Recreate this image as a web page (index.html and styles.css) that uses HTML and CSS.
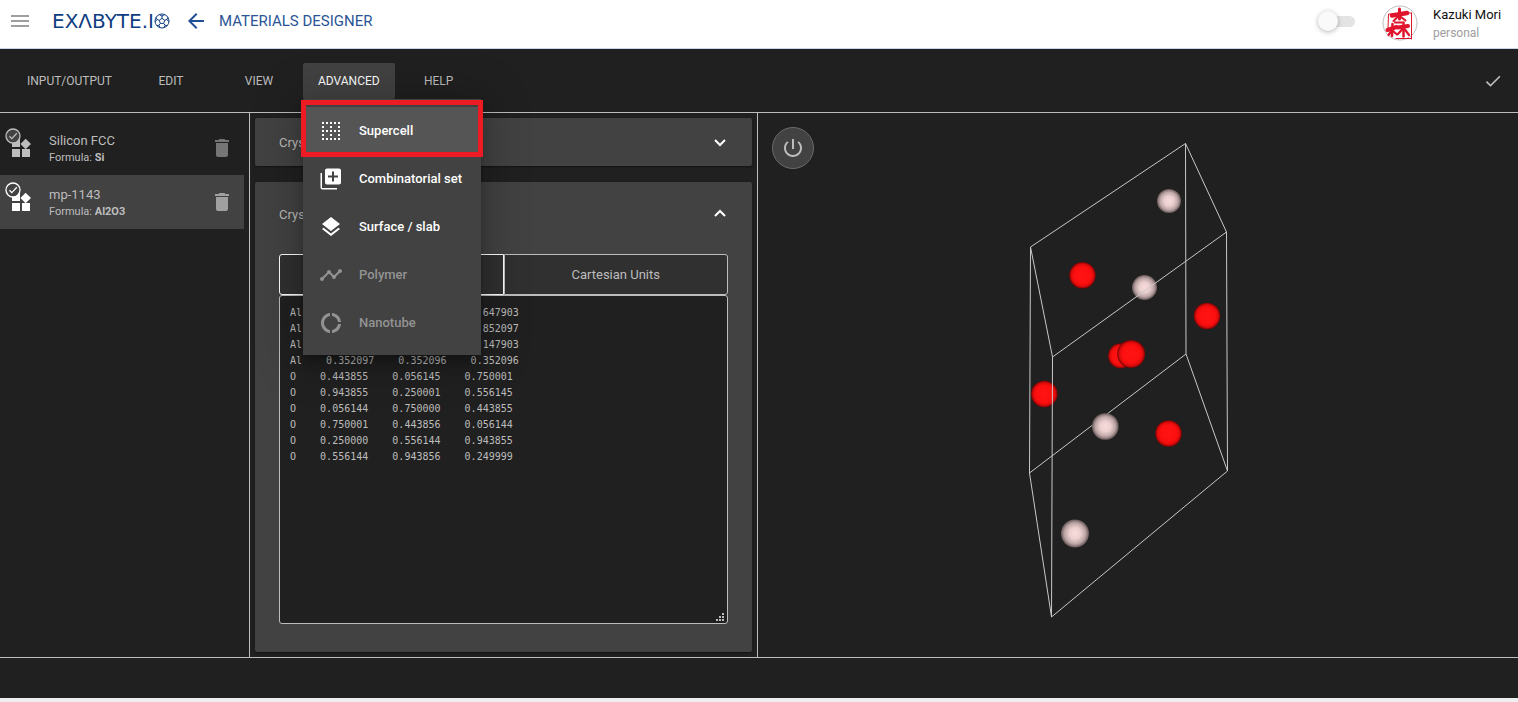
FILE: index.html
```html
<!DOCTYPE html>
<html lang="en">
<head>
<meta charset="utf-8">
<title>Materials Designer</title>
<link rel="stylesheet" href="styles.css">
</head>
<body>
<svg class="defs" aria-hidden="true">
  <defs>
    <symbol id="widgets" viewBox="0 0 24 24"><path d="M13 13v8h8v-8h-8zM3 21h8v-8H3v8zM3 3v8h8V3H3zm13.66-.31L11.4 8l5.26 5.26L22 8z"/></symbol>
    <symbol id="trash" viewBox="0 0 24 24"><path d="M6 19c0 1.100.9 2 2 2h8c1.100 0 2-.9 2-2V7H6v12zM19 4h-3.500l-1-1h-5l-1 1H5v2h14V4z"/></symbol>
    <symbol id="badge" viewBox="0 0 16 16"><circle cx="8" cy="8" r="7" fill="#424242" stroke="currentColor" stroke-width="1.300"/><path d="M4.500 8.300l2.300 2.300 5-5.300" fill="none" stroke="currentColor" stroke-width="1.300"/></symbol>
  </defs>
</svg>

<header class="header">
  <button class="icon-btn menu-toggle" aria-label="Menu"><svg viewBox="0 0 24 24"><path d="M3 18h18v-2H3v2zm0-5h18v-2H3v2zm0-7v2h18V6H3z"/></svg></button>
  <a class="logo" href="#">
    <span>EXΛBYTE.I</span>
    <svg viewBox="0 0 16 16"><g fill="none" stroke="currentColor" stroke-width="1"><circle cx="8" cy="8" r="7"/><path d="M8 5.300l2.700 2-1 3.100H6.300l-1-3.100zM8 5.300V3M10.700 7.300l2.200-.8M9.700 10.400l1.400 1.900M6.300 10.400l-1.400 1.900M5.300 7.300l-2.200-.8M5.200 1.600L8 3l2.800-1.400M14 4.400l-1.100 2.100 2 2.300M13.200 12.600l-2.100-.3-1.300 2.500M6.200 14.800l-1.300-2.500-2.100.3M1.100 8.800l2-2.300L2 4.400"/></g></svg>
  </a>
  <button class="icon-btn back" aria-label="Back"><svg viewBox="0 0 24 24"><path d="M20 11H7.830l5.590-5.590L12 4l-8 8 8 8 1.410-1.410L7.830 13H20v-2z"/></svg></button>
  <h1 class="title">MATERIALS DESIGNER</h1>
  <input class="switch" type="checkbox" role="switch" aria-label="Toggle mode">
  <svg class="avatar" viewBox="0 0 36 36" role="img" aria-label="Avatar">
    <circle cx="18" cy="18" r="17" fill="#fff" stroke="#bdbdbd"/>
    <g fill="none" stroke="#e0142c" stroke-linecap="round">
      <path stroke-width="1" d="M6.500 9.500l-.5 14M7 9h5M29.500 8v26M29 8h-5M14 33.500h15.500"/>
      <path stroke-width="4.500" d="M10 10.500l15-2.500"/>
      <path stroke-width="3" d="M17.500 4v10"/>
      <path stroke-width="2" d="M16.500 11l-5 5M19 12l4.500 3.500M13 17.500h7"/>
      <path stroke-width="4" d="M5.500 25l9-3M16 22.500l10-1.500"/>
      <path stroke-width="2.500" d="M10.500 19l-.5 12M21.500 17.500v14"/>
      <path stroke-width="2.200" d="M9.500 26l-3 4M11 26l4 3.500M20.500 24l-4.500 5M22.500 24l4.500 6"/>
    </g>
  </svg>
  <div class="user">
    <span class="user-name">Kazuki Mori</span>
    <span class="user-role">personal</span>
  </div>
</header>

<nav class="menubar">
  <button class="menu-btn">INPUT/OUTPUT</button>
  <button class="menu-btn">EDIT</button>
  <button class="menu-btn">VIEW</button>
  <div class="menu-wrap">
    <button class="menu-btn open" aria-expanded="true">ADVANCED</button>
    <div class="dropdown" role="menu">
      <button class="option selected" role="menuitem">
        <svg viewBox="0 0 24 24"><path d="M3 3h2v2H3zM7 3h2v2H7zM11 3h2v2h-2zM15 3h2v2h-2zM19 3h2v2h-2zM3 7h2v2H3zM11 7h2v2h-2zM19 7h2v2h-2zM3 11h2v2H3zM7 11h2v2H7zM11 11h2v2h-2zM15 11h2v2h-2zM19 11h2v2h-2zM3 15h2v2H3zM11 15h2v2h-2zM19 15h2v2h-2zM3 19h2v2H3zM7 19h2v2H7zM11 19h2v2h-2zM15 19h2v2h-2zM19 19h2v2h-2z"/></svg>
        Supercell</button>
      <button class="option" role="menuitem">
        <svg viewBox="0 0 24 24"><path d="M3 6H1.500v14.500c0 1.100.9 2 2 2H18V21H3V6zm17-4.500H8c-1.100 0-2 .9-2 2v12c0 1.100.9 2 2 2h12c1.100 0 2-.9 2-2v-12c0-1.100-.9-2-2-2zm-1 9h-4v4h-2v-4H9v-2h4v-4h2v4h4v2z"/></svg>
        Combinatorial set</button>
      <button class="option" role="menuitem">
        <svg viewBox="0 0 24 24"><path d="M11.990 18.540l-7.370-5.730L3 14.070l9 7 9-7-1.630-1.270-7.380 5.740zM12 16l7.360-5.730L21 9l-9-7-9 7 1.630 1.270L12 16z"/></svg>
        Surface / slab</button>
      <button class="option" role="menuitem" disabled>
        <svg viewBox="0 0 24 24"><path d="M23 8c0 1.100-.9 2-2 2-.18 0-.35-.02-.51-.07l-3.560 3.550c.05.16.07.34.07.52 0 1.100-.9 2-2 2s-2-.9-2-2c0-.18.02-.36.07-.52l-2.550-2.550c-.16.05-.34.07-.52.07s-.36-.02-.52-.07l-4.550 4.560c.05.16.07.33.07.51 0 1.100-.9 2-2 2s-2-.9-2-2 .9-2 2-2c.18 0 .35.02.51.07l4.560-4.550C8.020 9.360 8 9.180 8 9c0-1.100.9-2 2-2s2 .9 2 2c0 .18-.02.36-.07.52l2.550 2.550c.16-.05.34-.07.52-.07s.36.02.52.07l3.550-3.560C19.020 8.350 19 8.180 19 8c0-1.100.9-2 2-2s2 .9 2 2z"/></svg>
        Polymer</button>
      <button class="option" role="menuitem" disabled>
        <svg viewBox="0 0 24 24"><path d="M11 5.080V2c-5 .5-9 4.810-9 10s4 9.500 9 10v-3.080c-3-.48-6-3.400-6-6.920s3-6.440 6-6.920zM18.970 11H22c-.47-5-4-8.530-9-9v3.080C16 5.510 18.540 8 18.970 11zM13 18.920V22c5-.47 8.530-4 9-9h-3.030c-.43 3-2.970 5.490-5.970 5.920z"/></svg>
        Nanotube</button>
    </div>
  </div>
  <button class="menu-btn">HELP</button>
  <button class="icon-btn confirm" aria-label="Confirm"><svg viewBox="0 0 24 24"><path d="M9 16.170L4.830 12l-1.420 1.410L9 19 21 7l-1.410-1.410z"/></svg></button>
</nav>

<main class="workspace">
  <section class="materials">
    <div class="material">
      <div class="material-icon"><svg class="shape"><use href="#widgets"/></svg><svg class="tick"><use href="#badge"/></svg></div>
      <div class="material-text"><span class="material-name">Silicon FCC</span><span class="formula">Formula: <b>Si</b></span></div>
      <button class="icon-btn delete" aria-label="Delete Silicon FCC"><svg><use href="#trash"/></svg></button>
    </div>
    <div class="material active">
      <div class="material-icon"><svg class="shape"><use href="#widgets"/></svg><svg class="tick"><use href="#badge"/></svg></div>
      <div class="material-text"><span class="material-name">mp-1143</span><span class="formula">Formula: <b>Al2O3</b></span></div>
      <button class="icon-btn delete" aria-label="Delete mp-1143"><svg><use href="#trash"/></svg></button>
    </div>
  </section>

  <section class="editor">
    <div class="panel">
      <button class="panel-head">Crystal Lattice<svg viewBox="0 0 24 24"><path d="M7 10l5 5 5-5"/></svg></button>
    </div>
    <div class="panel expanded">
      <button class="panel-head">Crystal Basis<svg viewBox="0 0 24 24"><path d="M7 14l5-5 5 5"/></svg></button>
      <div class="panel-body">
        <div class="tabs">
          <button class="tab current" aria-label="Crystal Units"></button>
          <button class="tab">Cartesian Units</button>
        </div>
        <div class="coords-wrap">
<textarea class="coords" aria-label="Basis coordinates" spellcheck="false">
Al    0.647903    0.647903    0.647903
Al    0.852097    0.852097    0.852097
Al    0.147903    0.147903    0.147903
Al    0.352097    0.352096    0.352096
O    0.443855    0.056145    0.750001
O    0.943855    0.250001    0.556145
O    0.056144    0.750000    0.443855
O    0.750001    0.443856    0.056144
O    0.250000    0.556144    0.943855
O    0.556144    0.943856    0.249999</textarea>
          <svg class="grip" viewBox="0 0 8 8"><path d="M6 0h2v2H6zM3 3h2v2H3zM6 3h2v2H6zM0 6h2v2H0zM3 6h2v2H3zM6 6h2v2H6z"/></svg>
        </div>
      </div>
    </div>
  </section>

  <section class="viewer">
    <svg class="scene" viewBox="758 113 760 544" role="img" aria-label="Crystal structure">
      <defs>
        <radialGradient id="red"><stop offset="0" stop-color="#ff1414"/><stop offset=".65" stop-color="#fd0f0f"/><stop offset=".85" stop-color="#d90b0b"/><stop offset="1" stop-color="#700404"/></radialGradient>
        <radialGradient id="pale"><stop offset="0" stop-color="#f8dcdc"/><stop offset=".4" stop-color="#ecd0d0"/><stop offset=".75" stop-color="#bda5a5"/><stop offset="1" stop-color="#665858"/></radialGradient>
      </defs>
      <path class="edge" d="M1186 354L1029.500 473"/>
      <g fill="url(#pale)"><circle cx="1169" cy="201" r="12"/><circle cx="1144.500" cy="287.500" r="12.500"/><circle cx="1105.300" cy="426.500" r="13.300"/><circle cx="1075" cy="533.500" r="14"/></g>
      <g fill="url(#red)"><circle cx="1082.500" cy="275.300" r="13.300"/><circle cx="1207" cy="316" r="13.300"/><circle cx="1120.500" cy="355.800" r="12.500"/><circle cx="1131.200" cy="354" r="14"/><circle cx="1044.300" cy="394" r="13.300"/><circle cx="1168.500" cy="433.500" r="13.300"/></g>
      <path class="edge" d="M1185.500 143.500L1030.500 247L1052.500 357L1226.500 232ZL1186 354L1227.500 471L1051.500 617L1029.500 473L1030.500 247M1226.500 232L1227.500 471M1052.500 357L1051.500 617"/>
    </svg>
    <button class="power" aria-label="Toggle interaction"><svg viewBox="0 0 24 24"><path d="M13 3h-2v10h2V3zm4.830 2.170l-1.420 1.420C17.990 7.860 19 9.810 19 12c0 3.870-3.130 7-7 7s-7-3.130-7-7c0-2.190 1.010-4.140 2.580-5.420L6.170 5.170C4.230 6.820 3 9.260 3 12c0 4.970 4.030 9 9 9s9-4.030 9-9c0-2.740-1.230-5.180-3.170-6.830z"/></svg></button>
  </section>
</main>
<footer class="footer"></footer>
</body>
</html>
```

FILE: styles.css
```css
* { box-sizing: border-box; }

body {
  margin: 0;
  min-height: 100vh;
  display: flex;
  flex-direction: column;
  background: #202020;
  color: #bdbdbd;
  font-family: Roboto, "Liberation Sans", sans-serif;
  font-size: 13px;
}

button {
  margin: 0;
  padding: 0;
  border: 0;
  background: none;
  color: inherit;
  font: inherit;
}

svg { display: block; fill: currentColor; }
.defs { position: absolute; width: 0; height: 0; }
.icon-btn svg { width: 24px; height: 24px; }

/* Header */
.header {
  display: flex;
  align-items: center;
  height: 49px;
  padding: 0 16px 6px 8px;
  background: #fff;
  border-bottom: 1px solid #c9d6ea;
}
.menu-toggle { color: #9e9e9e; }
.logo {
  display: flex;
  align-items: center;
  margin-left: 20px;
  color: #0f3d82;
  font-family: "DejaVu Sans", sans-serif;
  font-size: 20px;
  line-height: 24px;
  text-decoration: none;
}
.logo svg { width: 16px; height: 16px; }
.back { margin-left: 14px; color: #1f4f95; }
.title {
  flex: 1;
  margin: 0 0 0 11px;
  color: #2a5596;
  font-size: 15px;
  font-weight: 400;
}
.switch {
  appearance: none;
  position: relative;
  width: 34px;
  height: 11px;
  margin: 0 27px 0 0;
  border-radius: 6px;
  background: #e4e4e4;
}
.switch::before {
  content: "";
  position: absolute;
  left: -3px;
  top: -5px;
  width: 20px;
  height: 20px;
  border-radius: 50%;
  background: #fafafa;
  box-shadow: 0 1px 5px rgba(0, 0, 0, .3);
}
.avatar { width: 36px; height: 36px; margin-top: 3px; }
.user {
  display: flex;
  flex-direction: column;
  margin: 6px 0 0 15px;
  min-width: 69px;
  line-height: 18px;
}
.user-name { color: #111; }
.user-role { color: #9e9e9e; font-size: 12px; }

/* Menu bar */
.menubar {
  display: flex;
  align-items: center;
  height: 63px;
  padding: 0 15px 0 12px;
}
.menu-btn {
  min-width: 88px;
  height: 36px;
  padding: 0 15px;
  border-radius: 2px;
  font-size: 12px;
}
.menu-btn.open { background: #424242; color: #fff; }
.menu-wrap { position: relative; }
.confirm { margin-left: auto; }
.confirm svg { width: 20px; height: 20px; }
.dropdown {
  position: absolute;
  z-index: 2;
  top: 36px;
  left: 0;
  min-width: 178px;
  padding: 8px 0;
  background: #424242;
  box-shadow: 0 5px 5px -3px rgba(0, 0, 0, .2), 0 8px 10px 1px rgba(0, 0, 0, .14), 0 3px 40px 8px rgba(0, 0, 0, .22);
}
.option {
  display: flex;
  align-items: center;
  gap: 16px;
  width: 100%;
  height: 48px;
  padding: 0 16px;
  color: #fff;
  font-weight: 500;
  white-space: nowrap;
}
.option svg { width: 24px; height: 24px; }
.option:disabled { color: #929292; }
.option.selected { position: relative; background: #555; }
.option.selected::after {
  content: "";
  position: absolute;
  inset: -7px -2px -2px;
  border: 5px solid #ed1c24;
}

/* Workspace */
.workspace {
  flex: 1;
  display: grid;
  grid-template-columns: 250fr 508fr 760fr;
  border-top: 1px solid #bdbdbd;
  border-bottom: 1px solid #bdbdbd;
}
.materials { padding: 8px 5px 0 0; border-right: 1px solid #bdbdbd; }
.material {
  display: flex;
  align-items: center;
  height: 54px;
  padding: 0 10px 0 9px;
}
.material.active { background: #424242; }
.material-icon { position: relative; }
.shape { width: 24px; height: 24px; }
.active .shape, .active .tick { color: #fff; }
.tick {
  position: absolute;
  top: -8px;
  left: -4px;
  width: 16px;
  height: 16px;
}
.material-text {
  flex: 1;
  display: flex;
  flex-direction: column;
  margin-left: 16px;
  padding-top: 2px;
}
.material-name { line-height: 18px; }
.formula { font-size: 11px; line-height: 16px; }
.delete { color: #757575; }
.active .delete { color: #a0a0a0; }

.editor {
  display: flex;
  flex-direction: column;
  gap: 16px;
  padding: 5px;
  border-right: 1px solid #bdbdbd;
}
.panel {
  background: #424242;
  border-radius: 2px;
  box-shadow: 0 1px 2px rgba(0, 0, 0, .4);
}
.panel-head {
  display: flex;
  align-items: center;
  justify-content: space-between;
  width: 100%;
  height: 48px;
  padding: 0 20px 0 24px;
}
.panel-head svg {
  width: 24px;
  height: 24px;
  fill: none;
  stroke: #fff;
  stroke-width: 2;
}
.expanded { flex: 1; display: flex; flex-direction: column; }
.expanded .panel-head { height: 64px; }
.panel-body {
  flex: 1;
  display: flex;
  flex-direction: column;
  padding: 8px 24px 28px;
}
.tabs { display: flex; }
.tab {
  flex: 1;
  height: 41px;
  border: 1px solid #bdbdbd;
  border-radius: 0 3px 3px 0;
  background: #303030;
}
.tab.current { border-color: #fff; border-radius: 3px 0 0 3px; }
.coords-wrap { position: relative; flex: 1; display: flex; }
.coords {
  flex: 1;
  margin: 0;
  padding: 9px 10px;
  border: 1px solid #bdbdbd;
  border-radius: 3px;
  background: #202020;
  color: #bdbdbd;
  font: 10px/16px "DejaVu Sans Mono", monospace;
  resize: none;
}
.grip { position: absolute; right: 4px; bottom: 3px; width: 8px; height: 8px; }

.viewer { position: relative; }
.scene { width: 100%; height: 100%; }
.edge { fill: none; stroke: #c8c8c8; stroke-width: 1; }
.power {
  position: absolute;
  top: 14px;
  left: 14px;
  width: 42px;
  height: 42px;
  display: flex;
  align-items: center;
  justify-content: center;
  border: 1px solid #6a6a6a;
  border-radius: 50%;
  background: #424242;
}
.power svg { width: 24px; height: 24px; }

.footer { height: 44px; border-bottom: 4px solid #eee; }
```
